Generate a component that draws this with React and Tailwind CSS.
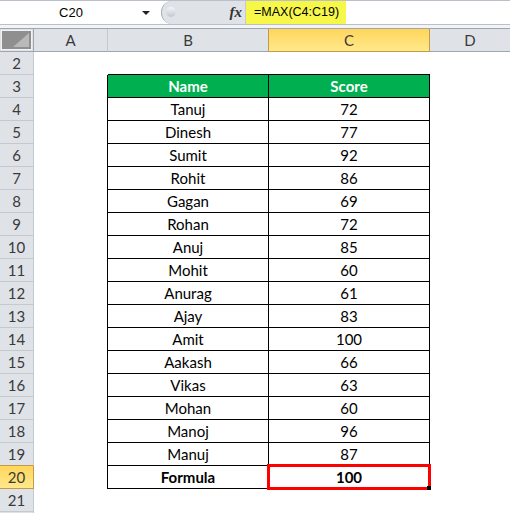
import React from 'react';

const people = [
  ['Tanuj', 72],
  ['Dinesh', 77],
  ['Sumit', 92],
  ['Rohit', 86],
  ['Gagan', 69],
  ['Rohan', 72],
  ['Anuj', 85],
  ['Mohit', 60],
  ['Anurag', 61],
  ['Ajay', 83],
  ['Amit', 100],
  ['Aakash', 66],
  ['Vikas', 63],
  ['Mohan', 60],
  ['Manoj', 96],
  ['Manuj', 87],
];

const rowNums = Array.from({ length: 21 }, (_, i) => i + 2);

function cellText(row, col) {
  if (row === 3) return col === 'B' ? 'Name' : 'Score';
  if (row === 20) return col === 'B' ? 'Formula' : '100';
  const p = people[row - 4];
  if (!p) return '';
  return col === 'B' ? p[0] : String(p[1]);
}

function FormulaBar() {
  return (
    <div className="flex h-[25px] border-y border-[#b9c0c9] bg-white font-['Liberation_Sans',sans-serif] text-[13px] text-black">
      <div className="flex w-[161px] items-center">
        <span className="w-[142px] text-center">C20</span>
        <span className="h-0 w-0 border-x-[4px] border-t-[4px] border-x-transparent border-t-[#222]" />
      </div>
      <div className="relative flex w-[84px] items-center justify-end rounded-l-[11px] border-l border-[#a9b0ba] bg-[#dfe3e8] pr-[3px]">
        <span className="absolute left-[4px] top-[6px] h-[10px] w-[10px] rounded-full bg-gradient-to-b from-[#f4f5f7] to-[#c3c8cf]" />
        <span className="font-['Liberation_Serif',serif] text-[15px] font-bold italic text-[#333]">fx</span>
      </div>
      <div className="flex flex-1 border-l border-[#c3c9d1]">
        <span className="flex h-full items-center bg-[#f7f74a] pl-[8px] pr-[7px] text-[12.5px]">=MAX(C4:C19)</span>
      </div>
    </div>
  );
}

function Corner() {
  return (
    <div className="border-b border-r border-[#9ea6b0] bg-[#dfe3e8] p-[1px]">
      <div className="relative h-full w-full border border-[#f2f2f2] bg-[#8f8f8f]">
        <svg className="absolute bottom-[2px] right-[2px]" width="16" height="14" viewBox="0 0 16 14">
          <polygon points="16,0 16,14 0,14" fill="#b9b9b9" />
        </svg>
      </div>
    </div>
  );
}

export default function App() {
  return (
    <div className="h-[513px] w-[510px] overflow-hidden bg-white font-['Lato',sans-serif]">
      <FormulaBar />
      <div className="h-[3px] bg-[#f3f4f6]" />
      <div className="grid grid-cols-[34px_74px_161px_161px_1fr] auto-rows-[23px] border-t border-[#9ea6b0] text-[15px]">
        <Corner />
        <div className="flex items-center justify-center border-b border-r border-[#9ea6b0] border-r-[#c4c9d0] bg-[#dfe3e8] text-[#3a3a3a]">A</div>
        <div className="flex items-center justify-center border-b border-r border-[#9ea6b0] border-r-[#c29a4a] bg-[#dfe3e8] text-[#3a3a3a]">B</div>
        <div className="flex items-center justify-center border-b border-r border-[#c29a4a] bg-gradient-to-b from-[#ffd55a] to-[#ffe98a] text-[#3a3a3a]">C</div>
        <div className="flex items-center justify-center border-b border-[#9ea6b0] bg-[#dfe3e8] text-[#3a3a3a]">D</div>

        {rowNums.map((r) => {
          const inTable = r >= 3 && r <= 20;
          const head = r === 3;
          const bold = r === 3 || r === 20;
          return (
            <React.Fragment key={r}>
              <div
                className={
                  r === 20
                    ? 'flex items-center justify-center border-b border-r border-[#c29a4a] bg-gradient-to-b from-[#ffd55a] to-[#ffe98a] text-[#3a3a3a]'
                    : r === 19
                      ? 'flex items-center justify-center border-b border-r border-[#c4c9d0] border-b-[#c29a4a] bg-[#dfe3e8] text-[#3a3a3a]'
                      : 'flex items-center justify-center border-b border-r border-[#c4c9d0] bg-[#dfe3e8] text-[#3a3a3a]'
                }
              >
                {r < 22 ? r : ''}
              </div>
              <div className={inTable ? 'border-r border-black' : ''} />
              {['B', 'C'].map((col) => (
                <div
                  key={col}
                  className={
                    'relative flex items-center justify-center text-black ' +
                    (r === 2 ? 'border-b border-black ' : '') +
                    (inTable ? 'border-b border-r border-black ' : '') +
                    (head ? 'bg-[#00b050] text-white ' : '') +
                    (bold ? 'font-bold ' : '')
                  }
                >
                  {inTable ? cellText(r, col) : ''}
                  {r === 20 && col === 'C' && (
                    <>
                      <div className="absolute -bottom-[2px] -left-[2px] -right-[2px] -top-[2px] border-[3px] border-[#ff0000]" />
                      <div className="absolute -bottom-[2px] -right-[2px] h-[4px] w-[4px] bg-black" />
                    </>
                  )}
                </div>
              ))}
              <div />
            </React.Fragment>
          );
        })}
      </div>
    </div>
  );
}
